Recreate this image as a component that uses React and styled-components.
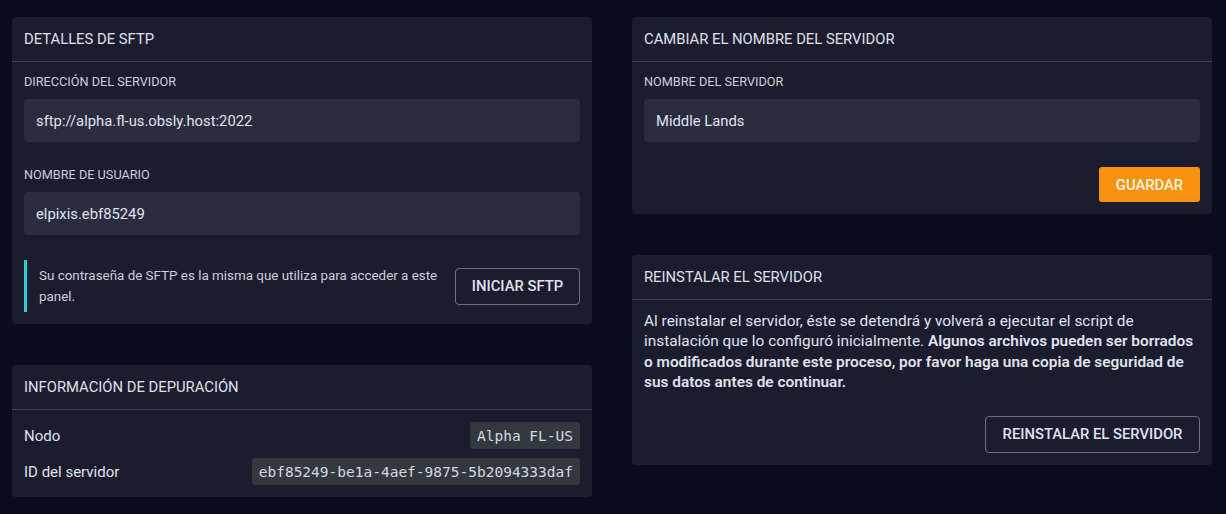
import React from "react";
import styled, { createGlobalStyle } from "styled-components";

const GlobalStyle = createGlobalStyle`
  html, body {
    margin: 0;
    padding: 0;
    background: #0b0d1b;
  }
  body {
    font-family: Roboto, "Noto Sans", "Liberation Sans", sans-serif;
    color: #dfe3ee;
  }
`;

const Page = styled.div`
  display: grid;
  grid-template-columns: 1fr 1fr;
  column-gap: 40px;
  padding: 17px 14px 16px 12px;
  align-items: start;
`;

const Column = styled.div`
  display: flex;
  flex-direction: column;
  gap: 41px;
`;

const Card = styled.section`
  background: #1c1c2e;
  border-radius: 4px;
`;

const CardHeader = styled.h2`
  margin: 0;
  height: 44px;
  display: flex;
  align-items: center;
  padding: 0 12px;
  font-size: 14.8px;
  font-weight: 400;
  text-transform: uppercase;
  color: #dce1ec;
  border-bottom: 1px solid #3e3d5a;
`;

const CardBody = styled.div`
  padding: ${(p) => p.$pad || "12px"};
`;

const Label = styled.label`
  display: block;
  font-size: 12.7px;
  line-height: 16px;
  text-transform: uppercase;
  color: #c9cfdd;
  margin-bottom: 9px;
`;

const Field = styled.div`
  margin-bottom: ${(p) => p.$mb || "25px"};
`;

const Input = styled.div`
  height: 43px;
  display: flex;
  align-items: center;
  padding: 0 12px;
  background: #2c2c41;
  border-radius: 4px;
  font-size: 14.8px;
  color: #dfe3ee;
`;

const AlertRow = styled.div`
  display: flex;
  align-items: center;
  gap: 10px;
`;

const Alert = styled.div`
  flex: 1;
  border-left: 3px solid #2bcfd6;
  padding: 5px 0 5px 12px;
  font-size: 13.4px;
  line-height: 21px;
  color: #c9cfdd;
`;

const OutlineButton = styled.button`
  height: 37px;
  padding: 0;
  background: transparent;
  border: 1px solid #6b7080;
  border-radius: 4px;
  color: #dfe3ee;
  font-family: inherit;
  font-size: 14.8px;
  font-weight: 500;
  text-transform: uppercase;
  cursor: pointer;
  flex-shrink: 0;
  width: ${(p) => p.$w || "auto"};
`;

const SaveButton = styled.button`
  height: 35px;
  width: 101px;
  background: #f7920e;
  border: none;
  border-radius: 3px;
  color: #fff4e4;
  font-family: inherit;
  font-size: 14.8px;
  font-weight: 500;
  text-transform: uppercase;
`;

const Actions = styled.div`
  display: flex;
  justify-content: flex-end;
  margin-top: ${(p) => p.$mt || "0"};
`;

const InfoRow = styled.div`
  display: flex;
  align-items: center;
  justify-content: space-between;
  font-size: 15px;
  color: #dfe3ee;
  & + & {
    margin-top: 9px;
  }
`;

const Code = styled.code`
  display: inline-flex;
  align-items: center;
  height: 27px;
  padding: 0 7px;
  background: #33383f;
  border-radius: 3px;
  font-family: "DejaVu Sans Mono", "Liberation Mono", monospace;
  font-size: 14.5px;
  color: #d4d8e0;
`;

const Paragraph = styled.p`
  margin: 0;
  font-size: 15.4px;
  line-height: 20.4px;
  color: #dfe3ee;
  strong {
    font-weight: 600;
  }
`;

export default function App() {
  return (
    <>
      <GlobalStyle />
      <Page>
        <Column>
          <Card>
            <CardHeader>Detalles de SFTP</CardHeader>
            <CardBody>
              <Field>
                <Label>Dirección del servidor</Label>
                <Input>sftp://alpha.fl-us.obsly.host:2022</Input>
              </Field>
              <Field>
                <Label>Nombre de usuario</Label>
                <Input>elpixis.ebf85249</Input>
              </Field>
              <AlertRow>
                <Alert>
                  Su contraseña de SFTP es la misma que utiliza para acceder a este panel.
                </Alert>
                <OutlineButton $w="125px">Iniciar SFTP</OutlineButton>
              </AlertRow>
            </CardBody>
          </Card>
          <Card>
            <CardHeader>Información de depuración</CardHeader>
            <CardBody>
              <InfoRow>
                <span>Nodo</span>
                <Code>Alpha FL-US</Code>
              </InfoRow>
              <InfoRow>
                <span>ID del servidor</span>
                <Code>ebf85249-be1a-4aef-9875-5b2094333daf</Code>
              </InfoRow>
            </CardBody>
          </Card>
        </Column>
        <Column>
          <Card>
            <CardHeader>Cambiar el nombre del servidor</CardHeader>
            <CardBody>
              <Field $mb="25px">
                <Label>Nombre del servidor</Label>
                <Input>Middle Lands</Input>
              </Field>
              <Actions>
                <SaveButton>Guardar</SaveButton>
              </Actions>
            </CardBody>
          </Card>
          <Card>
            <CardHeader>Reinstalar el servidor</CardHeader>
            <CardBody $pad="11px 12px 12px 12px">
              <Paragraph>
                Al reinstalar el servidor, éste se detendrá y volverá a ejecutar el script de
                instalación que lo configuró inicialmente.{" "}
                <strong>
                  Algunos archivos pueden ser borrados o modificados durante este proceso, por
                  favor haga una copia de seguridad de sus datos antes de continuar.
                </strong>
              </Paragraph>
              <Actions $mt="23px">
                <OutlineButton $w="215px">Reinstalar el servidor</OutlineButton>
              </Actions>
            </CardBody>
          </Card>
        </Column>
      </Page>
    </>
  );
}
